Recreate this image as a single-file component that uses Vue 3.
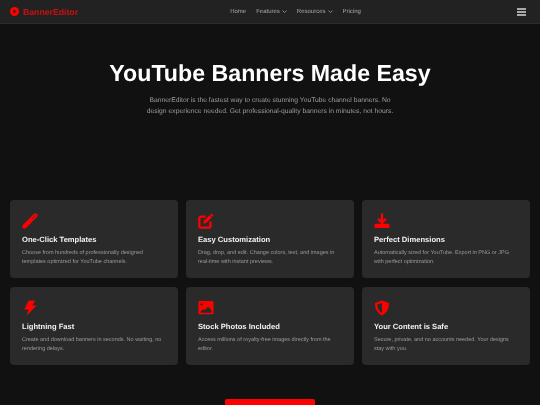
<script setup>
const navItems = [
  { label: 'Home', caret: false },
  { label: 'Features', caret: true },
  { label: 'Resources', caret: true },
  { label: 'Pricing', caret: false },
]

const features = [
  { icon: 'brush', title: 'One-Click Templates', text: 'Choose from hundreds of professionally designed templates optimized for YouTube channels.' },
  { icon: 'edit', title: 'Easy Customization', text: 'Drag, drop, and edit. Change colors, text, and images in real-time with instant previews.' },
  { icon: 'download', title: 'Perfect Dimensions', text: 'Automatically sized for YouTube. Export in PNG or JPG with perfect optimization.' },
  { icon: 'bolt', title: 'Lightning Fast', text: 'Create and download banners in seconds. No waiting, no rendering delays.' },
  { icon: 'image', title: 'Stock Photos Included', text: 'Access millions of royalty-free images directly from the editor.' },
  { icon: 'shield', title: 'Your Content is Safe', text: 'Secure, private, and no accounts needed. Your designs stay with you.' },
]
</script>

<template>
  <div class="page">
    <header class="topbar">
      <div class="brand">
        <svg class="brand-icon" viewBox="0 0 16 16">
          <circle cx="8" cy="8" r="8" fill="#f00" />
          <path d="M6 4.5 L11.5 8 L6 11.5 Z" fill="#222" />
        </svg>
        <span>BannerEditor</span>
      </div>
      <nav class="nav">
        <span v-for="item in navItems" :key="item.label" class="nav-item">
          {{ item.label }}
          <svg v-if="item.caret" class="caret" viewBox="0 0 10 6">
            <path d="M1 1 L5 5 L9 1" fill="none" stroke="currentColor" stroke-width="1.5" />
          </svg>
        </span>
      </nav>
      <div class="burger"><i></i><i></i><i></i></div>
    </header>

    <section class="hero">
      <h1>YouTube Banners Made Easy</h1>
      <p>BannerEditor is the fastest way to create stunning YouTube channel banners. No design experience needed. Get professional-quality banners in minutes, not hours.</p>
    </section>

    <section class="grid">
      <article v-for="f in features" :key="f.title" class="card">
        <svg class="icon" viewBox="0 0 18 18">
          <template v-if="f.icon === 'brush'">
            <path d="M2.8 15.2 L15 2.8" stroke="#f00" stroke-width="5" stroke-linecap="round" fill="none" />
            <path d="M11.5 6.4 L15 2.8" stroke="#5a2a2a" stroke-width="1.2" stroke-linecap="round" fill="none" />
          </template>
          <template v-else-if="f.icon === 'edit'">
            <path d="M8.5 4 H3.5 A2 2 0 0 0 1.5 6 V14.5 A2 2 0 0 0 3.5 16.5 H12 A2 2 0 0 0 14 14.5 V9.5" fill="none" stroke="#f00" stroke-width="2.6" />
            <path d="M6.5 8.8 L13 2.6 L15.5 5 L9 11.4 L6 11.8 Z" fill="#f00" />
            <path d="M14 1.6 A1.2 1.2 0 0 1 16.5 4 L16 4.5 L13.6 2.1 Z" fill="#f00" />
          </template>
          <template v-else-if="f.icon === 'download'">
            <path d="M9 0.5 V11 M4.6 6.6 L9 11 L13.4 6.6" fill="none" stroke="#f00" stroke-width="2.6" />
            <rect x="0.5" y="12" width="17" height="5" rx="1.2" fill="#f00" />
          </template>
          <template v-else-if="f.icon === 'bolt'">
            <path d="M7.5 0.6 H15 L11.6 6.2 H16.4 L5 17.8 L7.6 10.8 H2.6 Z" fill="#f00" />
          </template>
          <template v-else-if="f.icon === 'image'">
            <path fill-rule="evenodd" d="M2 1 H16 A1.5 1.5 0 0 1 17.5 2.5 V14.5 A1.5 1.5 0 0 1 16 16 H2 A1.5 1.5 0 0 1 0.5 14.5 V2.5 A1.5 1.5 0 0 1 2 1 Z M4 3.6 A1.3 1.3 0 1 0 4.01 3.6 Z M3 14.4 H15.2 V11.6 L11.4 7.2 L7.6 11.4 L5.8 10 L3 12.8 Z" fill="#f00" />
          </template>
          <template v-else>
            <path fill-rule="evenodd" d="M9 0.6 L16.8 3.4 C17 9.6 14.6 14.6 9 17.4 C3.4 14.6 1 9.6 1.2 3.4 Z M9 3.4 L3.6 5.2 C3.8 9.4 5.4 12.8 9 14.6 Z" fill="#f00" />
          </template>
        </svg>
        <h3>{{ f.title }}</h3>
        <p>{{ f.text }}</p>
      </article>
    </section>

    <div class="cta-wrap">
      <button class="cta">Get Started Free</button>
    </div>
  </div>
</template>

<style scoped>
.page {
  height: 405px;
  overflow: hidden;
  background: #111;
  font-family: "Liberation Sans", Arial, sans-serif;
  text-rendering: geometricPrecision;
  filter: blur(0.35px);
}
.topbar {
  height: 23px;
  background: #222;
  border-bottom: 1px solid #2c2c2c;
  display: flex;
  align-items: center;
  justify-content: space-between;
  padding: 0 14px 0 10px;
}
.brand {
  display: flex;
  align-items: center;
  gap: 4px;
  color: #cc0f0f;
  font-size: 8.7px;
  font-weight: 700;
  width: 100px;
}
.brand-icon {
  width: 9px;
  height: 9px;
}
.nav {
  display: flex;
  gap: 10px;
  margin-right: 36px;
}
.nav-item {
  display: flex;
  align-items: center;
  gap: 2px;
  color: #a8a8a8;
  font-size: 6px;
}
.caret {
  width: 5px;
  height: 3px;
}
.burger {
  display: flex;
  flex-direction: column;
  gap: 1px;
  width: 9px;
}
.burger i {
  height: 2px;
  background: #aaa;
}
.hero {
  text-align: center;
  padding-top: 35px;
}
.hero h1 {
  margin: 0;
  color: #fff;
  font-size: 23.2px;
  line-height: 28px;
  font-weight: 700;
}
.hero p {
  width: 252px;
  margin: 8px auto 0;
  color: #9c9c9c;
  font-size: 6.75px;
  line-height: 11px;
}
.grid {
  margin-top: 83px;
  padding: 0 10px;
  display: grid;
  grid-template-columns: repeat(3, 1fr);
  gap: 9px 8px;
}
.card {
  height: 78px;
  box-sizing: border-box;
  padding: 13px 12px 12px;
  background: #2a2a2a;
  border-radius: 4px;
}
.icon {
  display: block;
  width: 16px;
  height: 16px;
}
.card h3 {
  margin: 6px 0 0;
  color: #f2f2f2;
  font-size: 7.6px;
  line-height: 10px;
  font-weight: 700;
}
.card p {
  margin: 3.5px 0 0;
  color: #9a9a9a;
  font-size: 5.5px;
  line-height: 9px;
}
.cta-wrap {
  margin-top: 34px;
  display: flex;
  justify-content: center;
}
.cta {
  width: 90px;
  height: 16px;
  border: none;
  border-radius: 2px;
  background: #f00;
  color: #fff;
  font-family: inherit;
  font-size: 8px;
  font-weight: 700;
  padding: 0;
}
</style>
